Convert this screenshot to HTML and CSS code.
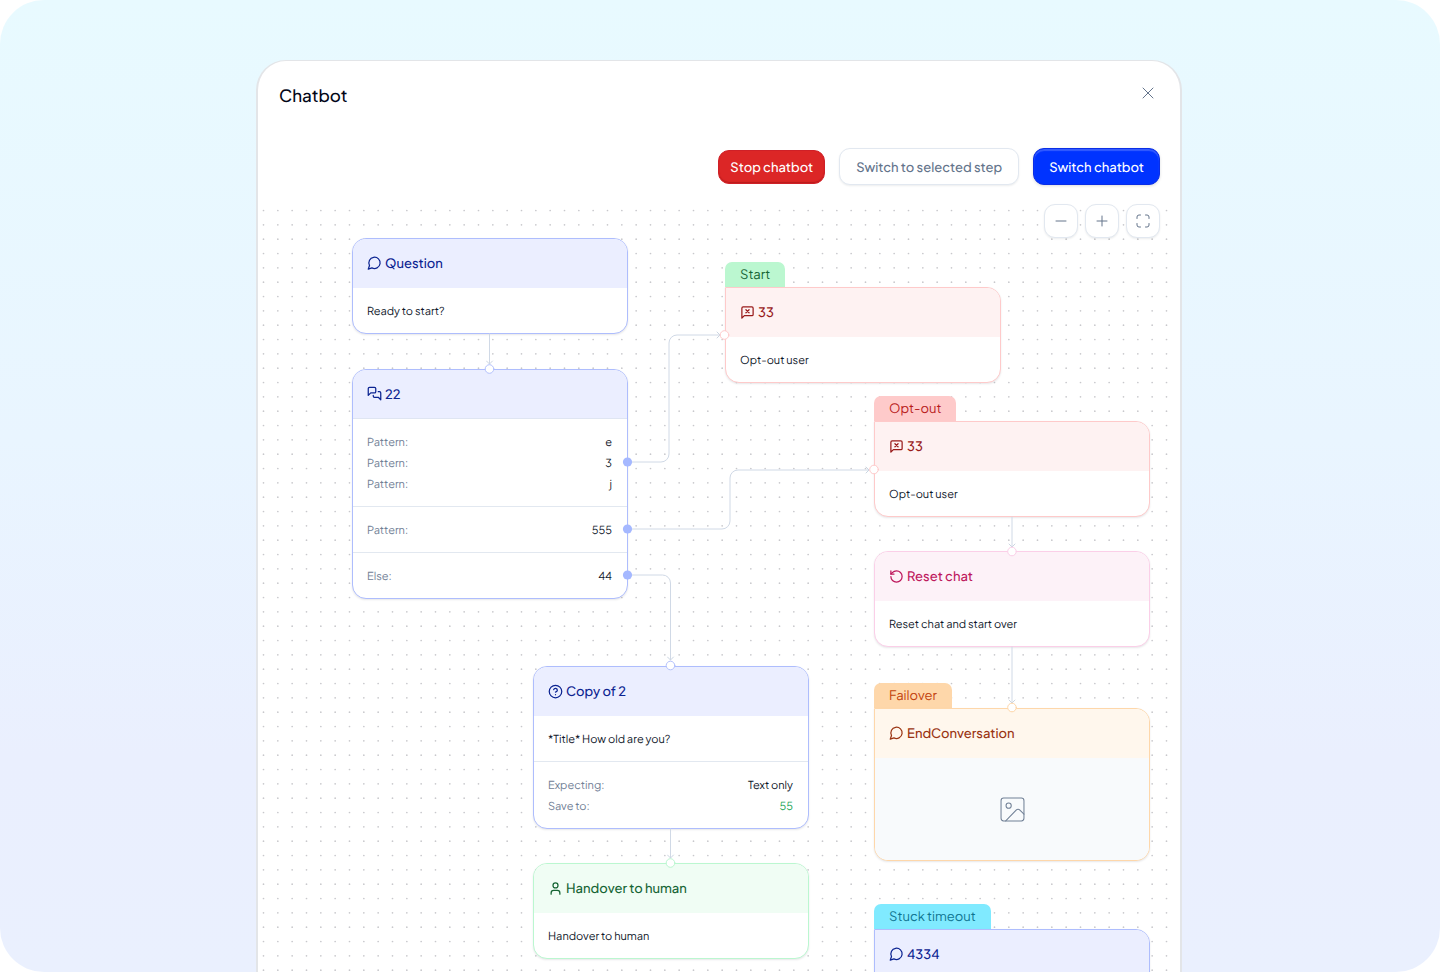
FILE: index.html
```html
<!DOCTYPE html>
<html lang="en">
<head>
    <meta charset="UTF-8">
    <meta name="viewport" content="width=device-width, initial-scale=1">
    <title>Chatbot</title>
    <link rel="stylesheet" href="styles.css">
</head>
<body>
    <!-- shared icons -->
    <svg class="icon-defs" aria-hidden="true">
        <symbol id="icon-message" viewBox="0 0 24 24">
            <path d="M7.900 20A9 9 0 1 0 4 16.100L2 22Z" transform="translate(0 -1)"/>
        </symbol>
        <symbol id="icon-messages" viewBox="0 0 24 24">
            <path d="M14 9a2 2 0 0 1-2 2H6l-4 4V4c0-1.100.9-2 2-2h8a2 2 0 0 1 2 2z"/>
            <path d="M18 9h2a2 2 0 0 1 2 2v11l-4-4h-6a2 2 0 0 1-2-2v-1"/>
        </symbol>
        <symbol id="icon-message-x" viewBox="0 0 24 24">
            <path d="M21 15a2 2 0 0 1-2 2H7l-4 4V5a2 2 0 0 1 2-2h14a2 2 0 0 1 2 2z"/>
            <path d="m14.500 7.500-5 5M9.500 7.500l5 5"/>
        </symbol>
        <symbol id="icon-reset" viewBox="0 0 24 24">
            <path d="M3 12a9 9 0 1 0 9-9 9.750 9.750 0 0 0-6.740 2.740L3 8"/>
            <path d="M3 3v5h5"/>
        </symbol>
        <symbol id="icon-help" viewBox="0 0 24 24">
            <circle cx="12" cy="12" r="10"/>
            <path d="M9.090 9a3 3 0 0 1 5.830 1c0 2-3 3-3 3M12 17h.01"/>
        </symbol>
        <symbol id="icon-user" viewBox="0 0 24 24">
            <circle cx="12" cy="7" r="4"/>
            <path d="M19 21v-2a4 4 0 0 0-4-4H9a4 4 0 0 0-4 4v2"/>
        </symbol>
        <symbol id="icon-image" viewBox="0 0 24 24">
            <rect x="1" y="1" width="22" height="22" rx="2.500"/>
            <circle cx="8.300" cy="8.300" r="2.500"/>
            <path d="M5.500 23 15.500 12.500a2.500 2.500 0 0 1 3.600 0L23 16.500"/>
        </symbol>
    </svg>

    <div class="stage">
        <main class="panel">
            <header class="panel-header">
                <h1>Chatbot</h1>
                <button class="close-btn" type="button" aria-label="Close">
                    <svg viewBox="0 0 12 12"><path d="M1 1l10 10M11 1 1 11"/></svg>
                </button>
            </header>

            <div class="toolbar">
                <button class="btn btn-danger" type="button">Stop chatbot</button>
                <button class="btn btn-outline" type="button">Switch to selected step</button>
                <button class="btn btn-primary" type="button">Switch chatbot</button>
            </div>

            <div class="canvas">
                <svg class="dots" aria-hidden="true">
                    <defs>
                        <!-- three dots per 43px tile -->
                        <pattern id="dot-grid" x="-2" y="7" width="43" height="43" patternUnits="userSpaceOnUse">
                            <g fill="#c8c8cc">
                                <circle cx="7.500" cy="7.500" r="0.850"/><circle cx="21.830" cy="7.500" r="0.850"/><circle cx="36.170" cy="7.500" r="0.850"/>
                                <circle cx="7.500" cy="21.830" r="0.850"/><circle cx="21.830" cy="21.830" r="0.850"/><circle cx="36.170" cy="21.830" r="0.850"/>
                                <circle cx="7.500" cy="36.170" r="0.850"/><circle cx="21.830" cy="36.170" r="0.850"/><circle cx="36.170" cy="36.170" r="0.850"/>
                            </g>
                        </pattern>
                    </defs>
                    <rect y="9" width="100%" height="100%" fill="url(#dot-grid)"/>
                </svg>

                <section class="step step-question">
                    <div class="node node-blue">
                        <h2><svg><use href="#icon-message"/></svg>Question</h2>
                        <div class="node-row"><p>Ready to start?</p></div>
                    </div>
                </section>

                <section class="step step-patterns">
                    <div class="node node-blue node-split">
                        <h2><svg><use href="#icon-messages"/></svg>22</h2>
                        <dl class="node-row">
                            <div><dt>Pattern:</dt><dd>e</dd></div>
                            <div><dt>Pattern:</dt><dd>3</dd></div>
                            <div><dt>Pattern:</dt><dd>j</dd></div>
                        </dl>
                        <dl class="node-row">
                            <div><dt>Pattern:</dt><dd>555</dd></div>
                        </dl>
                        <dl class="node-row">
                            <div><dt>Else:</dt><dd>44</dd></div>
                        </dl>
                    </div>
                </section>

                <section class="step step-start">
                    <span class="tab tab-green">Start</span>
                    <div class="node node-red">
                        <h2><svg><use href="#icon-message-x"/></svg>33</h2>
                        <div class="node-row"><p>Opt-out user</p></div>
                    </div>
                </section>

                <section class="step step-optout">
                    <span class="tab tab-red">Opt-out</span>
                    <div class="node node-red">
                        <h2><svg><use href="#icon-message-x"/></svg>33</h2>
                        <div class="node-row"><p>Opt-out user</p></div>
                    </div>
                </section>

                <section class="step step-reset">
                    <div class="node node-pink">
                        <h2><svg><use href="#icon-reset"/></svg>Reset chat</h2>
                        <div class="node-row"><p>Reset chat and start over</p></div>
                    </div>
                </section>

                <section class="step step-failover">
                    <span class="tab tab-orange">Failover</span>
                    <div class="node node-orange">
                        <h2><svg><use href="#icon-message"/></svg>EndConversation</h2>
                        <div class="node-image"><svg><use href="#icon-image"/></svg></div>
                    </div>
                </section>

                <section class="step step-timeout">
                    <span class="tab tab-cyan">Stuck timeout</span>
                    <div class="node node-blue">
                        <h2><svg><use href="#icon-message"/></svg>4334</h2>
                        <div class="node-row"></div>
                    </div>
                </section>

                <section class="step step-copy">
                    <div class="node node-blue">
                        <h2><svg><use href="#icon-help"/></svg>Copy of 2</h2>
                        <div class="node-row"><p>*Title* How old are you?</p></div>
                        <dl class="node-row">
                            <div><dt>Expecting:</dt><dd>Text only</dd></div>
                            <div><dt>Save to:</dt><dd class="saved">55</dd></div>
                        </dl>
                    </div>
                </section>

                <section class="step step-handover">
                    <div class="node node-green">
                        <h2><svg><use href="#icon-user"/></svg>Handover to human</h2>
                        <div class="node-row"><p>Handover to human</p></div>
                    </div>
                </section>

                <svg class="links" aria-hidden="true">
                    <defs>
                        <marker id="arrow" markerWidth="8" markerHeight="8" refX="4" refY="4" orient="auto" markerUnits="userSpaceOnUse">
                            <path d="M1 1l3 3-3 3" fill="none" stroke="#cbd5e1"/>
                        </marker>
                    </defs>
                    <g class="edges">
                        <path d="M231.500 138v30"/>
                        <path d="M370 266h33a8 8 0 0 0 8-8V147a8 8 0 0 1 8-8h43"/>
                        <path d="M370 333h94a8 8 0 0 0 8-8v-43a8 8 0 0 1 8-8h131"/>
                        <path d="M370 379h34.500a8 8 0 0 1 8 8v77"/>
                        <path d="M412.500 633v29"/>
                        <path d="M754 321v30"/>
                        <path d="M754 451v56"/>
                    </g>
                    <g class="outputs">
                        <circle cx="369.500" cy="266" r="4.600"/>
                        <circle cx="369.500" cy="333" r="4.600"/>
                        <circle cx="369.500" cy="379" r="4.600"/>
                    </g>
                    <g class="inputs">
                        <circle cx="231.500" cy="173" r="4.300" stroke="#b3c1fd"/>
                        <circle cx="412.500" cy="469.500" r="4.300" stroke="#b3c1fd"/>
                        <circle cx="412.500" cy="667" r="4.300" stroke="#bbf7d0"/>
                        <circle cx="466.500" cy="139" r="4.300" stroke="#fecaca"/>
                        <circle cx="616" cy="273.500" r="4.300" stroke="#fecaca"/>
                        <circle cx="754" cy="355.500" r="4.300" stroke="#fbcfe8"/>
                        <circle cx="754" cy="511.500" r="4.300" stroke="#fed7aa"/>
                    </g>
                </svg>

                <div class="zoom-controls">
                    <button type="button" aria-label="Zoom out">
                        <svg viewBox="0 0 14 14"><path d="M2 7h10"/></svg>
                    </button>
                    <button type="button" aria-label="Zoom in">
                        <svg viewBox="0 0 14 14"><path d="M2 7h10M7 2v10"/></svg>
                    </button>
                    <button type="button" aria-label="Fit view">
                        <svg viewBox="0 0 14 14"><path d="M1 4.500V3a2 2 0 0 1 2-2h1.500M9.500 1H11a2 2 0 0 1 2 2v1.500M13 9.500V11a2 2 0 0 1-2 2H9.500M4.500 13H3a2 2 0 0 1-2-2V9.500"/></svg>
                    </button>
                </div>
            </div>
        </main>
    </div>
</body>
</html>
```
FILE: styles.css
```css
* {
    box-sizing: border-box;
}

body {
    margin: 0;
    background: #fff;
    font-family: "Plus Jakarta Sans", Inter, sans-serif;
    color: #0f172a;
    text-rendering: geometricPrecision;
}

h1, h2, p, dl, dd {
    margin: 0;
}

button {
    font-family: inherit;
    text-rendering: inherit;
    cursor: pointer;
}

svg {
    fill: none;
    stroke: currentColor;
    stroke-linecap: round;
    stroke-linejoin: round;
}

.icon-defs {
    position: absolute;
    width: 0;
    height: 0;
}

.stage {
    display: flex;
    height: 100vh;
    padding: 60px 258px 0 256px;
    overflow: hidden;
    border-radius: 44px;
    background: linear-gradient(180deg, #e8faff 0%, #e9f5ff 45%, #eaeffe 78%, #eaf0fe 100%);
}

.panel {
    flex: 1;
    display: flex;
    flex-direction: column;
    min-width: 0;
    border: 2px solid #e3e5e8;
    border-top-width: 1px;
    border-bottom: none;
    border-radius: 30px 30px 0 0;
    background: #fff;
    overflow: hidden;
}

.panel-header {
    display: flex;
    align-items: flex-start;
    justify-content: space-between;
    padding: 22px 26px 0 21px;
}

.panel-header h1 {
    font-size: 17px;
    line-height: 24px;
    font-weight: 500;
    color: #020617;
}

.close-btn {
    display: flex;
    padding: 4px 0;
    border: none;
    background: none;
    color: #64748b;
}

.close-btn svg {
    width: 12px;
    height: 12px;
}

.toolbar {
    display: flex;
    align-items: center;
    justify-content: flex-end;
    gap: 14px;
    padding: 41px 20px 11px;
}

.btn {
    height: 37px;
    padding: 0 15px;
    border: 1px solid transparent;
    border-radius: 11px;
    font-size: 13px;
    line-height: 20px;
    font-weight: 500;
    white-space: nowrap;
}

.btn-danger {
    height: 34px;
    padding: 0 11px;
    background: #dc2626;
    border-color: #cf2027;
    color: #fff;
    box-shadow: inset 0 -1px 1px #b91c1c;
}

.btn-outline {
    padding: 0 16px;
    background: #fff;
    border-color: #e2e8f0;
    color: #64748b;
    box-shadow: 0 1px 2px rgba(15, 23, 42, 0.08);
}

.btn-primary {
    background: #0033ff;
    border-color: #0a2ee6;
    color: #fff;
    box-shadow: inset 0 2px 1px rgba(255, 255, 255, 0.2), 0 1px 3px rgba(15, 23, 42, 0.15);
}

.canvas {
    position: relative;
    flex: 1;
    min-height: 0;
    overflow: hidden;
}

.dots,
.links {
    position: absolute;
    inset: 0;
    width: 100%;
    height: 100%;
    stroke: none;
}

.links {
    pointer-events: none;
}

.edges {
    stroke: #d0d9e6;
}

.edges path {
    marker-end: url(#arrow);
}

.outputs {
    fill: #a5b8ff;
}

.inputs {
    fill: #fff;
}

.zoom-controls {
    position: absolute;
    top: 8px;
    right: 20px;
    display: flex;
    gap: 7px;
}

.zoom-controls button {
    display: flex;
    align-items: center;
    justify-content: center;
    width: 34px;
    height: 34px;
    padding: 0;
    border: 1px solid #e2e8f0;
    border-radius: 11px;
    background: #fff;
    color: #64748b;
    box-shadow: 0 1px 2px rgba(15, 23, 42, 0.08);
}

.zoom-controls svg {
    width: 14px;
    height: 14px;
}

/* flow steps */
.step {
    position: absolute;
    display: flex;
    flex-direction: column;
    align-items: flex-start;
    width: 276px;
}

.step-question { left: 94px; top: 42px; }
.step-patterns { left: 94px; top: 173px; }
.step-start { left: 467px; top: 66px; }
.step-optout { left: 616px; top: 200px; }
.step-reset { left: 616px; top: 355px; }
.step-failover { left: 616px; top: 487px; }
.step-timeout { left: 616px; top: 708px; }
.step-copy { left: 275px; top: 470px; }
.step-handover { left: 275px; top: 667px; }

.tab {
    padding: 0 15px;
    border-radius: 7px 7px 0 0;
    font-size: 13px;
    line-height: 25px;
}

.tab-green { background: #bbf7d0; color: #166534; }
.tab-red { background: #fecaca; color: #b91c1c; }
.tab-orange { background: #fed7aa; color: #c2410c; }
.tab-cyan { background: #80eaff; color: #0e7490; }

.node {
    width: 100%;
    border: 1px solid;
    border-radius: 14px;
    background: #fff;
    overflow: hidden;
    box-shadow: 0 1px 2px rgba(15, 23, 42, 0.1);
}

.tab + .node {
    border-top-left-radius: 0;
}

.node h2 {
    display: flex;
    align-items: center;
    gap: 3px;
    height: 49px;
    padding: 0 14px 1px;
    font-size: 13px;
    line-height: 18px;
    font-weight: 500;
}

.node h2 svg {
    width: 15px;
    height: 15px;
    stroke-width: 2;
}

.node-blue { border-color: #aebdfd; }
.node-blue h2 { background: #ebeeff; color: #0b2391; }
.node-red { border-color: #fecaca; }
.node-red h2 { background: #fef2f2; color: #991b1b; }
.node-pink { border-color: #fbcfe8; }
.node-pink h2 { background: #fdf2f8; color: #be185d; }
.node-orange { border-color: #fed7aa; }
.node-orange h2 { background: #fff7ed; color: #9a3412; }
.node-green { border-color: #bbf7d0; }
.node-green h2 { background: #f0fdf4; color: #166534; }

.node-split h2 {
    border-bottom: 1px solid #dfe5f2;
}

.node-row {
    min-height: 45px;
    padding: 13px 15px 11px 14px;
    font-size: 11px;
    line-height: 21px;
}

.node-row + .node-row {
    border-top: 1px solid #e2e8f0;
}

.node-row div {
    display: flex;
    justify-content: space-between;
}

.node-row dt {
    color: #718096;
}

.node-row .saved {
    color: #22a455;
}

.node-image {
    display: flex;
    align-items: center;
    justify-content: center;
    height: 102px;
    background: #f8fafc;
    color: #718096;
}

.node-image svg {
    width: 25px;
    height: 25px;
}
```
